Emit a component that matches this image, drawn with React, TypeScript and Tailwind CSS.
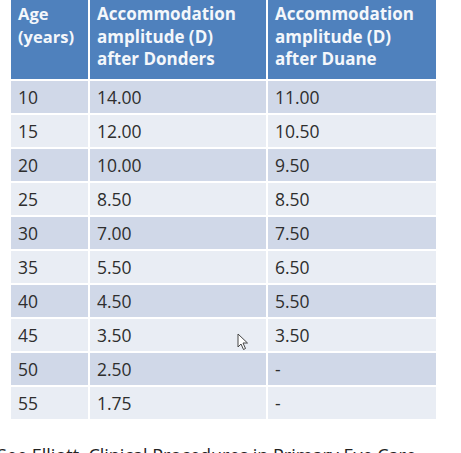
const rows: [string, string, string][] = [
  ["10", "14.00", "11.00"],
  ["15", "12.00", "10.50"],
  ["20", "10.00", "9.50"],
  ["25", "8.50", "8.50"],
  ["30", "7.00", "7.50"],
  ["35", "5.50", "6.50"],
  ["40", "4.50", "5.50"],
  ["45", "3.50", "3.50"],
  ["50", "2.50", "-"],
  ["55", "1.75", "-"],
];

function Cursor() {
  return (
    <svg className="absolute left-[237px] top-[333px]" width="12" height="18" viewBox="0 0 12 18">
      <path d="M1 1 L1 14 L4 11 L6.5 16.5 L8.5 15.5 L6 10 L10.5 10 Z" fill="#fff" stroke="#444" strokeWidth="1" strokeLinejoin="round" />
    </svg>
  );
}

export default function App() {
  return (
    <div className="relative w-[461px] h-[453px] overflow-hidden bg-white font-['Open_Sans',sans-serif]">
      <div className="ml-[11px] w-[425px] grid grid-cols-[77px_176px_168px] gap-x-[2px] gap-y-[2px]">
        <div className="bg-[#4f81bd] h-[79px] pl-[7px] pt-[3px] text-[16.5px] leading-[22.5px] font-bold text-[#f4f7fb]">
          Age
          <br />
          (years)
        </div>
        <div className="bg-[#4f81bd] h-[79px] pl-[7px] pt-[3px] text-[17px] leading-[22.5px] font-bold text-[#f4f7fb]">
          Accommodation
          <br />
          amplitude (D)
          <br />
          after Donders
        </div>
        <div className="bg-[#4f81bd] h-[79px] pl-[7px] pt-[3px] text-[17px] leading-[22.5px] font-bold text-[#f4f7fb]">
          Accommodation
          <br />
          amplitude (D)
          <br />
          after Duane
        </div>
        {rows.map((r, i) =>
          r.map((c, j) => (
            <div
              key={i + "-" + j}
              className={
                (i % 2 === 0 ? "bg-[#d0d8e8]" : "bg-[#e9edf4]") +
                " h-[32px] flex items-center pl-[7px] text-[17.5px] text-[#2e2e2e]"
              }
            >
              {c}
            </div>
          ))
        )}
      </div>
      <div className="mt-[24px] -ml-[3px] whitespace-nowrap text-[18px] leading-[24px] text-[#222]">
        See Elliott, Clinical Procedures in Primary Eye Care
      </div>
      <Cursor />
    </div>
  );
}
